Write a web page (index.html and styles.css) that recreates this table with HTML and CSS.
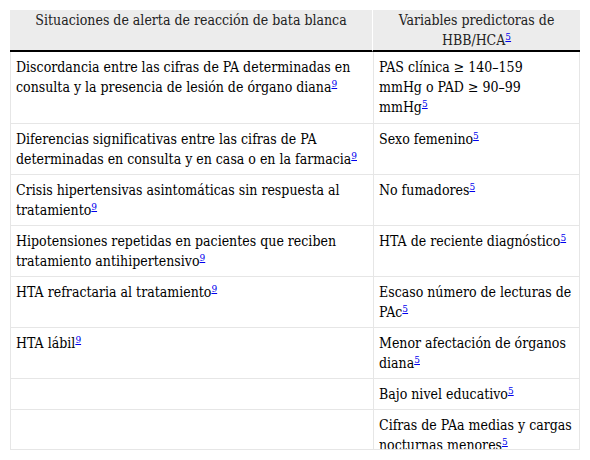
FILE: index.html
```html
<!DOCTYPE html>
<html lang="es">
<head>
<meta charset="utf-8">
<link rel="stylesheet" href="styles.css">
</head>
<body>
<div class="wrap">
<table class="tbl">
<thead>
<tr>
<th class="c1">Situaciones de alerta de reacción de bata blanca</th>
<th class="c2">Variables predictoras de HBB/HCA<a class="ref" href="#">5</a></th>
</tr>
</thead>
<tbody>
<tr class="first">
<td>Discordancia entre las cifras de PA determinadas en consulta y la presencia de lesión de órgano diana<a class="ref" href="#">9</a></td>
<td>PAS clínica ≥ 140–159<br>mmHg o PAD ≥ 90–99<br>mmHg<a class="ref" href="#">5</a></td>
</tr>
<tr>
<td>Diferencias significativas entre las cifras de PA determinadas en consulta y en casa o en la farmacia<a class="ref" href="#">9</a></td>
<td>Sexo femenino<a class="ref" href="#">5</a></td>
</tr>
<tr>
<td>Crisis hipertensivas asintomáticas sin respuesta al tratamiento<a class="ref" href="#">9</a></td>
<td>No fumadores<a class="ref" href="#">5</a></td>
</tr>
<tr>
<td>Hipotensiones repetidas en pacientes que reciben tratamiento antihipertensivo<a class="ref" href="#">9</a></td>
<td>HTA de reciente diagnóstico<a class="ref" href="#">5</a></td>
</tr>
<tr>
<td>HTA refractaria al tratamiento<a class="ref" href="#">9</a></td>
<td>Escaso número de lecturas de PAc<a class="ref" href="#">5</a></td>
</tr>
<tr>
<td>HTA lábil<a class="ref" href="#">9</a></td>
<td>Menor afectación de órganos diana<a class="ref" href="#">5</a></td>
</tr>
<tr>
<td></td>
<td>Bajo nivel educativo<a class="ref" href="#">5</a></td>
</tr>
<tr>
<td></td>
<td>Cifras de PAa medias y cargas nocturnas menores<a class="ref" href="#">5</a></td>
</tr>
</tbody>
</table>
</div>
</body>
</html>
```
FILE: styles.css
```css
html, body {
  margin: 0;
  padding: 0;
  background: #fff;
}
body {
  padding: 10px 0 0 10px;
  font-family: "DejaVu Serif Condensed", "DejaVu Serif", serif;
  font-size: 14px;
  color: #000;
}
.wrap {
  width: 570px;
  height: 440px;
  overflow: hidden;
  border-bottom: 1px solid #e6e6e6;
  box-sizing: border-box;
}
.tbl {
  width: 570px;
  border-collapse: separate;
  border-spacing: 0;
  table-layout: fixed;
  font: inherit;
  line-height: 20px;
}
.tbl th {
  background: #ececec;
  font-weight: normal;
  color: #222;
  text-align: center;
  vertical-align: top;
  padding: 0 5px 0 5px;
  border-bottom: 2px solid #000;
  height: 40px;
  box-sizing: border-box;
}
.tbl th.c1 {
  width: 363px;
  border-right: 1px solid #fff;
}
.tbl td {
  vertical-align: top;
  padding: 5px 5px 5px 5px;
  border-bottom: 1px solid #e6e6e6;
  border-left: 1px solid #e6e6e6;
}
.tbl tr.first td {
  padding-bottom: 6px;
}
.tbl td:last-child {
  border-right: 1px solid #e6e6e6;
}
.ref {
  color: #00e;
  text-decoration: underline;
  font-size: 10px;
  vertical-align: 5px;
  line-height: 0;
}
```
